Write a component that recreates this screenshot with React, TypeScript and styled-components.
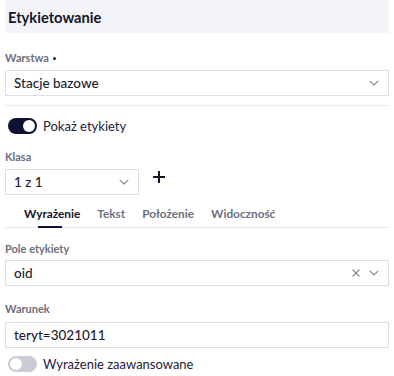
import React from "react";
import styled, { createGlobalStyle } from "styled-components";

const GlobalStyle = createGlobalStyle`
  body {
    margin: 0;
    background: #fff;
    font-family: Lato, "Noto Sans", sans-serif;
    color: #1c1c2c;
  }
`;

const Panel = styled.div`
  width: 384px;
  padding: 0 5px;
  display: flex;
  flex-direction: column;
`;

const Header = styled.div`
  height: 33px;
  background: #f3f4f7;
  display: flex;
  align-items: center;
  padding-left: 3px;
  font-size: 14.7px;
  font-weight: 700;
  color: #14142a;
`;

const Label = styled.div<{ $top: number }>`
  margin-top: ${({ $top }) => $top}px;
  font-size: 11px;
  font-weight: 700;
  color: #6e6e7c;
  height: 14px;
  line-height: 14px;
  display: flex;
  align-items: center;
  gap: 4px;
`;

const Dot = styled.span`
  width: 3px;
  height: 3px;
  border-radius: 50%;
  background: #1c1c2c;
`;

const Field = styled.div<{ $top: number; $width?: string }>`
  margin-top: ${({ $top }) => $top}px;
  width: ${({ $width }) => $width || "100%"};
  box-sizing: border-box;
  height: 26px;
  border: 1px solid #dcdfe5;
  display: flex;
  align-items: center;
  padding: 0 8px;
  font-size: 13.5px;
  font-weight: 500;
  color: #1c1c2c;
`;

const FieldText = styled.span`
  flex: 1;
`;

const Icons = styled.span`
  display: flex;
  align-items: center;
  gap: 9px;
  padding-right: 1px;
`;

const Divider = styled.div`
  margin-top: 9px;
  height: 1px;
  background: #e8eaee;
`;

const ToggleRow = styled.div<{ $top: number }>`
  margin-top: ${({ $top }) => $top}px;
  height: 16px;
  line-height: 16px;
  display: flex;
  align-items: center;
  gap: 6px;
  padding-left: 3px;
  font-size: 13px;
  color: #22223a;
`;

const Switch = styled.span<{ $on: boolean }>`
  width: 29px;
  height: 16px;
  border-radius: 8px;
  background: ${({ $on }) => ($on ? "#0e1035" : "#c9ccd3")};
  position: relative;
  flex-shrink: 0;
  &::after {
    content: "";
    position: absolute;
    top: 2px;
    left: ${({ $on }) => ($on ? "15px" : "2px")};
    width: 12px;
    height: 12px;
    border-radius: 50%;
    background: #fff;
  }
`;

const ClassRow = styled.div`
  display: flex;
  align-items: flex-start;
  gap: 14px;
`;

const PlusButton = styled.span`
  margin-top: 7px;
  display: flex;
`;

const Tabs = styled.div`
  display: flex;
  border-bottom: 1px solid #e8eaee;
  padding-left: 19px;
  gap: 17px;
`;

const Tab = styled.div<{ $active?: boolean }>`
  position: relative;
  height: 28px;
  padding-top: 4px;
  display: flex;
  align-items: center;
  font-size: 11.8px;
  font-weight: 700;
  color: ${({ $active }) => ($active ? "#14142a" : "#6e7180")};
  &::after {
    content: "";
    display: ${({ $active }) => ($active ? "block" : "none")};
    position: absolute;
    bottom: -1px;
    left: 14px;
    width: 24px;
    height: 2px;
    background: #0e1035;
  }
`;

const Chevron = () => (
  <svg width="10" height="6" viewBox="0 0 10 6" fill="none">
    <path d="M0.8 0.8L5 5l4.2-4.2" stroke="#7b8596" strokeWidth="1.1" />
  </svg>
);

const Cross = () => (
  <svg width="8" height="8" viewBox="0 0 8 8" fill="none">
    <path d="M0.6 0.6l6.8 6.8M7.4 0.6L0.6 7.4" stroke="#7b8596" strokeWidth="1.3" />
  </svg>
);

const Plus = () => (
  <svg width="12" height="12" viewBox="0 0 12 12" fill="none">
    <path d="M6 0v12M0 6h12" stroke="#14142a" strokeWidth="2" />
  </svg>
);

export default function App() {
  return (
    <>
      <GlobalStyle />
      <Panel>
        <Header>Etykietowanie</Header>

        <Label $top={18}>
          Warstwa <Dot />
        </Label>
        <Field $top={5}>
          <FieldText>Stacje bazowe</FieldText>
          <Icons>
            <Chevron />
          </Icons>
        </Field>

        <Divider />

        <ToggleRow $top={12}>
          <Switch $on />
          Pokaż etykiety
        </ToggleRow>

        <Label $top={16}>Klasa</Label>
        <ClassRow>
          <Field $top={5} $width="134px">
            <FieldText>1 z 1</FieldText>
            <Icons>
              <Chevron />
            </Icons>
          </Field>
          <PlusButton>
            <Plus />
          </PlusButton>
        </ClassRow>

        <Tabs>
          <Tab $active>Wyrażenie</Tab>
          <Tab>Tekst</Tab>
          <Tab>Położenie</Tab>
          <Tab>Widoczność</Tab>
        </Tabs>

        <Label $top={14}>Pole etykiety</Label>
        <Field $top={4}>
          <FieldText>oid</FieldText>
          <Icons>
            <Cross />
            <Chevron />
          </Icons>
        </Field>

        <Label $top={16}>Warunek</Label>
        <Field $top={6}>
          <FieldText>teryt=3021011</FieldText>
        </Field>

        <ToggleRow $top={8}>
          <Switch $on={false} />
          Wyrażenie zaawansowane
        </ToggleRow>
      </Panel>
    </>
  );
}
